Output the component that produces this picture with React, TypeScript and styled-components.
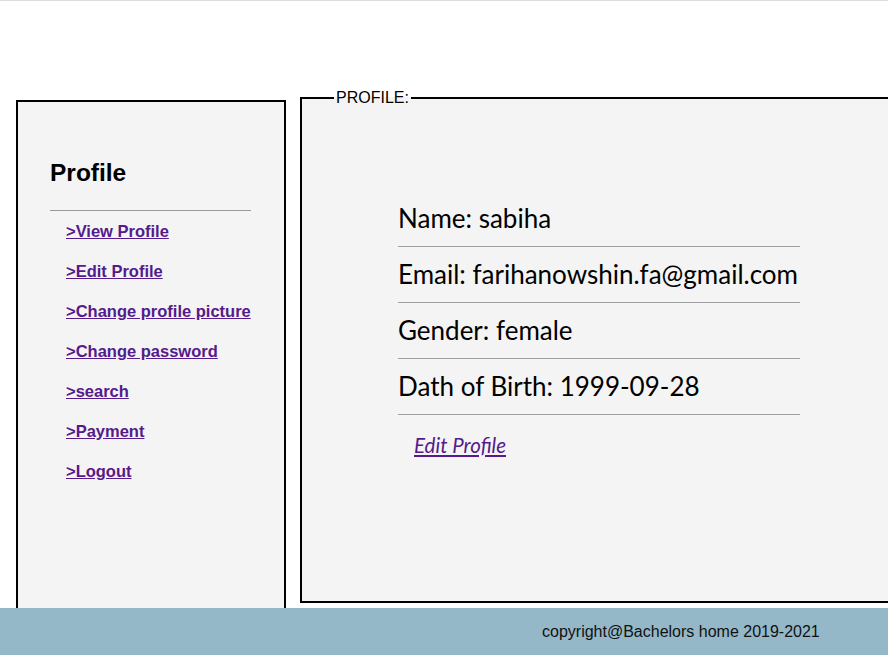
import React from "react";
import styled, { createGlobalStyle } from "styled-components";

const GlobalStyle = createGlobalStyle`
  html, body {
    margin: 0;
    padding: 0;
    background: #ffffff;
    overflow: hidden;
  }
  body {
    font-family: "Liberation Sans", Arial, sans-serif;
  }
`;

const Page = styled.div`
  border-top: 1px solid #dddddd;
  height: 654px;
  overflow: hidden;
`;

const Main = styled.div`
  display: flex;
  align-items: flex-start;
  gap: 14px;
  padding: 88px 0 0 16px;
  width: 1200px;
`;

const Sidebar = styled.aside`
  box-sizing: border-box;
  width: 270px;
  height: 540px;
  margin-top: 11px;
  border: 2px solid #000;
  background: #f4f4f4;
  padding: 56px 32px 0 32px;
`;

const SideTitle = styled.h2`
  margin: 0;
  font-size: 24.5px;
  line-height: 30px;
  font-weight: bold;
  color: #000;
`;

const SideRule = styled.div`
  width: 201px;
  height: 1px;
  margin-top: 22px;
  background: #999999;
`;

const SideNav = styled.nav`
  display: flex;
  flex-direction: column;
  padding: 10px 0 0 16px;
  gap: 20px;
`;

const SideLink = styled.a`
  font-size: 16.5px;
  line-height: 20px;
  font-weight: bold;
  color: #551a8b;
  text-decoration: underline;
  align-self: flex-start;
`;

const Panel = styled.fieldset`
  box-sizing: border-box;
  width: 620px;
  height: 514px;
  margin: 0;
  border: 2px solid #000;
  background: #f4f4f4;
  padding: 0 32px;
`;

const Legend = styled.legend`
  padding: 0 2px;
  font-size: 16px;
  line-height: 18px;
  color: #000;
`;

const Details = styled.div`
  width: 402px;
  margin: 84px 0 0 64px;
  font-family: Lato, "Open Sans", sans-serif;
`;

const Row = styled.div`
  height: 55px;
  line-height: 55px;
  border-bottom: 1px solid #a0a0a0;
  font-size: 26px;
  color: #000;
  white-space: nowrap;
`;

const EditLink = styled.a`
  display: inline-block;
  margin: 18px 0 0 80px;
  font-family: Lato, "Open Sans", sans-serif;
  font-style: italic;
  font-size: 20.5px;
  color: #551a8b;
  text-decoration: underline;
`;

const Footer = styled.footer`
  position: fixed;
  left: 0;
  right: 0;
  bottom: 0;
  height: 47px;
  background: #95b8c8;
  display: flex;
  align-items: center;
  padding-left: 542px;
  font-size: 16px;
  color: #111;
`;

const links = [
  ">View Profile",
  ">Edit Profile",
  ">Change profile picture",
  ">Change password",
  ">search",
  ">Payment",
  ">Logout",
];

const rows = [
  "Name: sabiha",
  "Email: farihanowshin.fa@gmail.com",
  "Gender: female",
  "Dath of Birth: 1999-09-28",
];

export default function App() {
  return (
    <Page>
      <GlobalStyle />
      <Main>
        <Sidebar>
          <SideTitle>Profile</SideTitle>
          <SideRule />
          <SideNav>
            {links.map((l) => (
              <SideLink key={l} href="#">
                {l}
              </SideLink>
            ))}
          </SideNav>
        </Sidebar>
        <Panel>
          <Legend>PROFILE:</Legend>
          <Details>
            {rows.map((r) => (
              <Row key={r}>{r}</Row>
            ))}
          </Details>
          <EditLink href="#">Edit Profile</EditLink>
        </Panel>
      </Main>
      <Footer>copyright@Bachelors home 2019-2021</Footer>
    </Page>
  );
}
